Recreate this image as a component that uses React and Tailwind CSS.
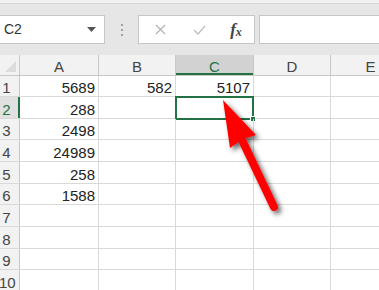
const GREEN = "#217346";

const columns = [
  { key: "A", width: "w-[79px]" },
  { key: "B", width: "w-[77px]" },
  { key: "C", width: "w-[78px]" },
  { key: "D", width: "w-[77px]" },
  { key: "E", width: "w-[80px]" },
];

const rowHeights = ["h-[21px]", "h-[22px]", "h-[21px]", "h-[22px]", "h-[22px]", "h-[21px]", "h-[22px]", "h-[22px]", "h-[21px]", "h-[22px]"];

const data = {
  1: { A: "5689", B: "582", C: "5107" },
  2: { A: "288" },
  3: { A: "2498" },
  4: { A: "24989" },
  5: { A: "258" },
  6: { A: "1588" },
};

const FormulaBar = () => (
  <div className="h-[55px] bg-[#e6e6e6] flex flex-col">
    <div className="h-[4px] bg-[#f1f1f1] border-b border-[#d6d6d6]" />
    <div className="mt-[11px] h-[29px] flex items-stretch">
      {/* name box */}
      <div className="w-[105px] bg-white border-y border-r border-[#c6c6c6] flex items-center justify-between pl-[4px] pr-[8px]">
        <span className="text-[14px] text-[#333]">C2</span>
        <svg width="9" height="5" viewBox="0 0 9 5"><path d="M0 0 L9 0 L4.5 5 Z" fill="#555" /></svg>
      </div>
      <div className="w-[33px] flex flex-col items-center justify-center gap-[3px]">
        <div className="w-[2px] h-[2px] bg-[#a0a0a0]" />
        <div className="w-[2px] h-[2px] bg-[#a0a0a0]" />
        <div className="w-[2px] h-[2px] bg-[#a0a0a0]" />
      </div>
      {/* cancel / enter / fx */}
      <div className="w-[117px] bg-white border border-[#c6c6c6] flex items-center">
        <div className="w-[42px] flex justify-center">
          <svg width="11" height="11" viewBox="0 0 11 11"><path d="M1 1 L10 10 M10 1 L1 10" stroke="#b4b4b4" strokeWidth="1.3" /></svg>
        </div>
        <div className="w-[36px] flex justify-center">
          <svg width="13" height="10" viewBox="0 0 13 10"><path d="M1 5 L5 9 L12 1" stroke="#c0c0c0" strokeWidth="1.4" fill="none" /></svg>
        </div>
        <div className="w-[36px] flex justify-center items-center font-['Liberation_Serif',serif] italic text-[#444] pl-[2px]">
          <span className="text-[17px] font-bold leading-none">f</span>
          <span className="text-[12px] font-bold leading-none mt-[4px]">x</span>
        </div>
      </div>
      <div className="w-[4px]" />
      <div className="flex-1 bg-white border-y border-l border-[#c6c6c6]" />
    </div>
  </div>
);

const HeaderRow = () => (
  <div className="h-[21px] flex bg-[#f2f2f2] border-b border-[#c8c8c8]">
    <div className="w-[20px] shrink-0 border-r border-[#c8c8c8] relative">
      <svg className="absolute right-[3px] bottom-[3px]" width="11" height="11" viewBox="0 0 11 11"><path d="M11 0 L11 11 L0 11 Z" fill="#dcdcdc" /></svg>
    </div>
    {columns.map((col) =>
      col.key === "C" ? (
        <div key={col.key} className={`${col.width} shrink-0 bg-[#d2d2d2] border-r border-[#c8c8c8] flex items-end justify-center text-[15px] text-[#217346] leading-none pb-[1px] shadow-[inset_0_-2px_0_#217346]`}>
          {col.key}
        </div>
      ) : (
        <div key={col.key} className={`${col.width} shrink-0 border-r border-[#c8c8c8] flex items-end justify-center text-[15px] text-[#444] leading-none pb-[1px]`}>
          {col.key}
        </div>
      )
    )}
  </div>
);

const Row = ({ n, height }) => {
  const values = data[n] || {};
  const selected = n === 2;
  return (
    <div className={`${height} flex border-b border-[#d9d9d9]`}>
      <div className={`w-[20px] shrink-0 flex items-end text-[15px] leading-none pb-[1px] ${selected ? "bg-[#e1e1e1] text-[#217346] border-r-2 border-[#217346]" : "bg-[#f2f2f2] text-[#444] border-r border-[#c8c8c8]"}`}>
        <span className="w-[15px] text-center -ml-[1px]">{n}</span>
      </div>
      {columns.map((col) => (
        <div key={col.key} className={`${col.width} shrink-0 border-r border-[#d9d9d9] flex items-end justify-end pr-[3px] pb-[1px] text-[15px] leading-none text-[#222] relative`}>
          {values[col.key]}
          {selected && col.key === "C" && (
            <div className="absolute -left-[1px] -top-[1px] -right-[1px] -bottom-[2px] border-2 border-[#217346]">
              <div className="absolute -right-[4px] -bottom-[4px] w-[6px] h-[6px] bg-[#217346] border border-white" />
            </div>
          )}
        </div>
      ))}
    </div>
  );
};

const Arrow = () => (
  <svg className="absolute inset-0 pointer-events-none" width="379" height="290" viewBox="0 0 379 290">
    <defs>
      <filter id="sh" x="-50%" y="-50%" width="200%" height="200%">
        <feDropShadow dx="3" dy="3" stdDeviation="2.5" floodColor="#000" floodOpacity="0.6" />
      </filter>
    </defs>
    <g filter="url(#sh)">
      <line x1="242" y1="140" x2="274" y2="207" stroke="#ff0000" strokeWidth="8" strokeLinecap="round" />
      <path d="M223 100 L256 135 L243 139 L230 148 Z" fill="#ff0000" />
    </g>
  </svg>
);

export default function App() {
  return (
    <div className="w-[379px] h-[290px] overflow-hidden relative bg-white font-['Liberation_Sans',Arial,sans-serif]">
      <FormulaBar />
      <HeaderRow />
      {rowHeights.map((h, i) => (
        <Row key={i} n={i + 1} height={h} />
      ))}
      <Arrow />
    </div>
  );
}
